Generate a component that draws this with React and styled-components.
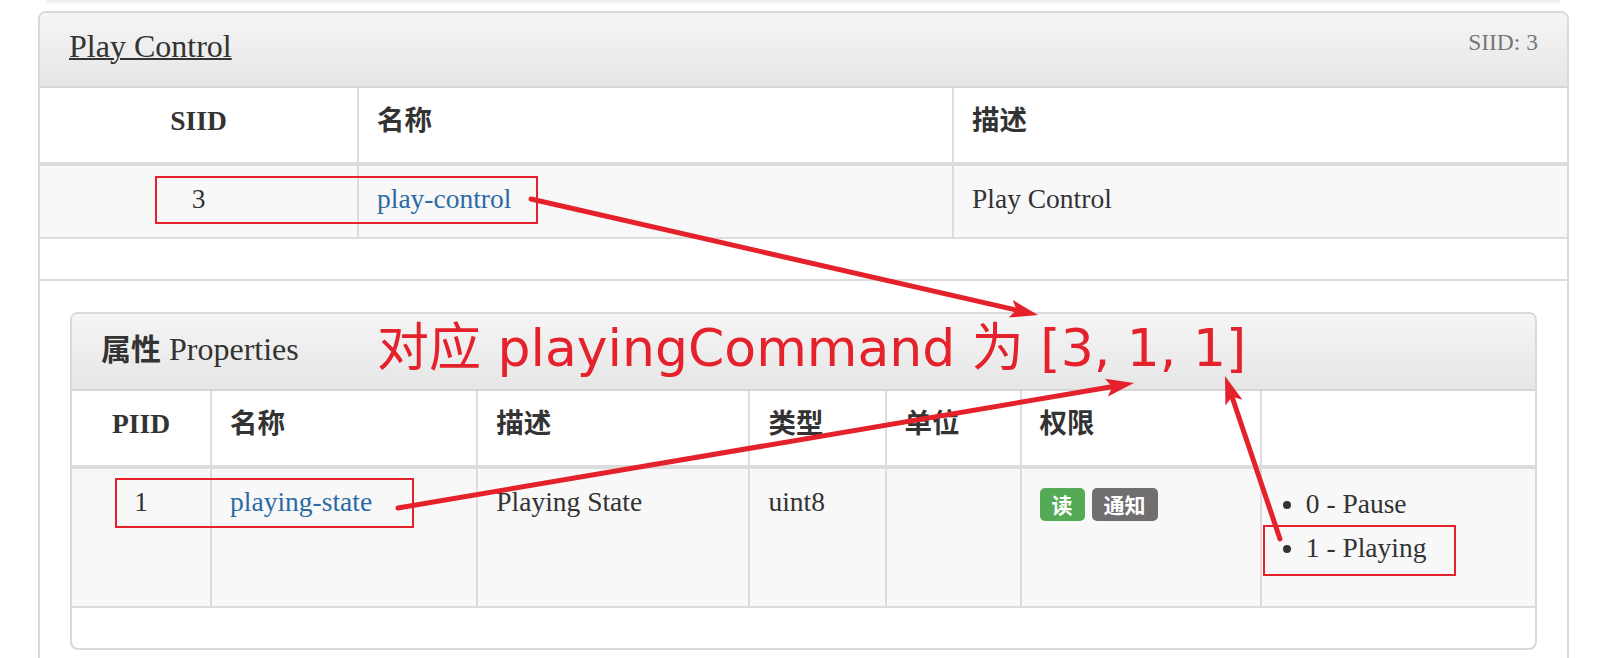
import React from 'react';
import styled, { createGlobalStyle } from 'styled-components';

const RED = '#e5212b';
const LINE = '#dcdcdc';

const GlobalStyle = createGlobalStyle`
  html, body { margin: 0; padding: 0; background: #fff; overflow: hidden; }
  body {
    font-family: "Liberation Serif", "Noto Sans CJK SC", serif;
    color: #333;
  }
`;

const Page = styled.div`
  position: relative;
  width: 1610px;
  height: 658px;
  box-sizing: border-box;
  padding: 0 41px 0 38px;
  overflow: hidden;
`;

const PrevEdge = styled.div`
  height: 5px;
  margin: 0 8px 6px;
  border-radius: 0 0 8px 8px;
  background: linear-gradient(#ededed, #fcfcfc);
`;

const Panel = styled.section`
  border: 2px solid #d9d9d9;
  border-radius: 8px;
  background: #fff;
  overflow: hidden;
`;

const Heading = styled.header`
  display: flex;
  justify-content: space-between;
  align-items: flex-start;
  padding: 16px 29px 22px;
  background: linear-gradient(to bottom, #f5f5f5, #e6e6e6);
  border-bottom: 2px solid #d6d6d6;
`;

const Title = styled.h3`
  margin: 0;
  font-size: 32px;
  line-height: 35px;
  font-weight: normal;
  color: #333;
  text-decoration: ${(p) => (p.$underline ? 'underline' : 'none')};
  text-decoration-thickness: 2px;
`;

const Strong = styled.b`
  font-family: "Noto Sans CJK SC", sans-serif;
  font-weight: 700;
  font-size: 30px;
`;

const Meta = styled.span`
  font-size: 23.5px;
  line-height: 27px;
  color: #777;
`;

const Table = styled.table`
  width: 100%;
  border-collapse: collapse;
  table-layout: fixed;
  margin-bottom: 40px;
`;

const Th = styled.th`
  padding: 13px 18px 21px;
  line-height: 40px;
  font-size: 27.5px;
  font-weight: bold;
  color: #333;
  background: #fff;
  text-align: ${(p) => (p.$center ? 'center' : 'left')};
  border-bottom: 4px solid ${LINE};
  border-left: 2px solid ${LINE};
  &:first-child { border-left: none; }
`;

const Td = styled.td`
  padding: 13px 18px 18px;
  vertical-align: top;
  line-height: 40px;
  font-size: 27.5px;
  color: #333;
  background: #f8f8f8;
  text-align: ${(p) => (p.$center ? 'center' : 'left')};
  border-left: 2px solid ${LINE};
  border-bottom: 2px solid ${LINE};
  &:first-child { border-left: none; }
`;

const Link = styled.a`
  color: #2b6aa5;
  text-decoration: none;
`;

const PanelBody = styled.div`
  border-top: 2px solid ${LINE};
  padding: 31px 30px 30px;
`;

const Badges = styled.div`
  display: flex;
  gap: 7px;
  margin-top: 6px;
`;

const Badge = styled.span`
  font-family: "Noto Sans CJK SC", sans-serif;
  font-weight: 700;
  font-size: 21px;
  line-height: 21px;
  color: #fff;
  padding: 6px 12px;
  border-radius: 5px;
  background: ${(p) => (p.$tone === 'success' ? '#55aa55' : '#706e71')};
`;

const Enum = styled.ul`
  margin: 0 0 18px;
  padding-left: 26px;
  line-height: 44px;
`;

const Overlay = styled.svg`
  position: absolute;
  top: 0;
  left: 0;
  pointer-events: none;
`;

const Callout = styled.div`
  position: absolute;
  left: 377px;
  top: 322px;
  font-family: "DejaVu Sans", "Noto Sans CJK SC", sans-serif;
  font-size: 52px;
  line-height: 52px;
  color: ${RED};
  white-space: nowrap;
`;

function Arrow({ x1, y1, x2, y2 }) {
  const dx = x2 - x1;
  const dy = y2 - y1;
  const len = Math.hypot(dx, dy);
  const ux = dx / len;
  const uy = dy / len;
  const L = 28;
  const W = 9;
  const bx = x2 - ux * L;
  const by = y2 - uy * L;
  const nx = -uy;
  const ny = ux;
  const mx = x2 - ux * (L - 4);
  const my = y2 - uy * (L - 4);
  return (
    <g>
      <line x1={x1} y1={y1} x2={mx} y2={my} stroke={RED} strokeWidth="5" strokeLinecap="round" />
      <polygon
        points={`${x2},${y2} ${bx + nx * W},${by + ny * W} ${x2 - ux * (L - 6)},${y2 - uy * (L - 6)} ${bx - nx * W},${by - ny * W}`}
        fill={RED}
      />
    </g>
  );
}

const serviceCols = [318, 595, 614];
const propCols = [139, 266, 272, 136, 135, 240, 274];

export default function App() {
  return (
    <>
      <GlobalStyle />
      <Page>
        <PrevEdge />
        <Panel>
          <Heading>
            <Title $underline>Play Control</Title>
            <Meta>SIID: 3</Meta>
          </Heading>
          <Table>
            <colgroup>
              {serviceCols.map((w, i) => (
                <col key={i} style={{ width: w }} />
              ))}
            </colgroup>
            <thead>
              <tr>
                <Th $center>SIID</Th>
                <Th>名称</Th>
                <Th>描述</Th>
              </tr>
            </thead>
            <tbody>
              <tr>
                <Td $center>3</Td>
                <Td><Link>play-control</Link></Td>
                <Td>Play Control</Td>
              </tr>
            </tbody>
          </Table>
          <PanelBody>
            <Panel>
              <Heading>
                <Title><Strong>属性</Strong> Properties</Title>
              </Heading>
              <Table>
                <colgroup>
                  {propCols.map((w, i) => (
                    <col key={i} style={{ width: w }} />
                  ))}
                </colgroup>
                <thead>
                  <tr>
                    <Th $center>PIID</Th>
                    <Th>名称</Th>
                    <Th>描述</Th>
                    <Th>类型</Th>
                    <Th>单位</Th>
                    <Th>权限</Th>
                    <Th></Th>
                  </tr>
                </thead>
                <tbody>
                  <tr>
                    <Td $center>1</Td>
                    <Td><Link>playing-state</Link></Td>
                    <Td>Playing State</Td>
                    <Td>uint8</Td>
                    <Td></Td>
                    <Td>
                      <Badges>
                        <Badge $tone="success">读</Badge>
                        <Badge>通知</Badge>
                      </Badges>
                    </Td>
                    <Td>
                      <Enum>
                        <li>0 - Pause</li>
                        <li>1 - Playing</li>
                      </Enum>
                    </Td>
                  </tr>
                </tbody>
              </Table>
            </Panel>
          </PanelBody>
        </Panel>

        <Overlay width="1610" height="658" viewBox="0 0 1610 658">
          <rect x="156" y="177" width="381" height="46" fill="none" stroke={RED} strokeWidth="2" />
          <rect x="116" y="479" width="297" height="48" fill="none" stroke={RED} strokeWidth="2" />
          <rect x="1264" y="526" width="191" height="49" fill="none" stroke={RED} strokeWidth="2" />
          <Arrow x1={531} y1={199} x2={1038} y2={315} />
          <Arrow x1={398} y1={508} x2={1134} y2={383} />
          <Arrow x1={1280} y1={539} x2={1225} y2={376} />
        </Overlay>
        <Callout>对应 playingCommand 为 [3, 1, 1]</Callout>
      </Page>
    </>
  );
}
